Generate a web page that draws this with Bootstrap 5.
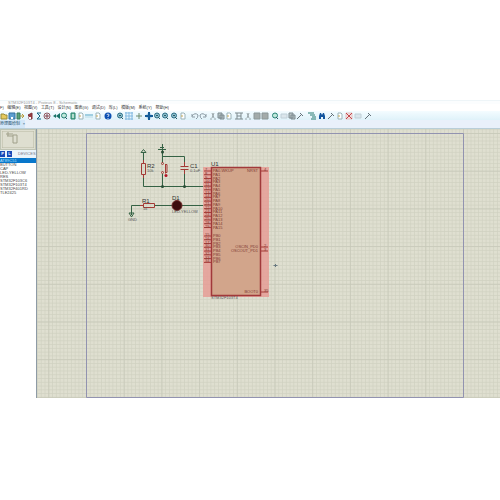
<!DOCTYPE html>
<html lang="zh-CN">
<head>
<meta charset="utf-8">
<meta name="viewport" content="width=device-width, initial-scale=1">
<title>Schematic Capture</title>
<link href="https://cdn.jsdelivr.net/npm/bootstrap@5.3.0/dist/css/bootstrap.min.css" rel="stylesheet">
<style>
body{font:4px/7px "Liberation Sans","Noto Sans CJK SC",sans-serif;color:#333;background:#fff;overflow-x:hidden}
button{border:0;background:none;padding:0;font:inherit;color:inherit;line-height:inherit}
.app-window{margin-top:100px}
.title-strip{height:4px;line-height:3px;background:#fbfdfe;border-top:1px solid #eef5f8;padding-left:8px;color:#999;overflow:hidden}
.menu-strip{height:7px;max-width:169px;background:#fff;overflow:hidden;white-space:nowrap}
.menu-strip button{flex:none}
.tool-strip{height:9px;background:linear-gradient(#f4fcff,#dff2fa)}
.tool{flex:none;width:8px;height:9px;display:flex;align-items:center}
.tool svg{width:8px;height:8px;fill:none;stroke:#506c78;stroke-width:1}
.s1{margin-left:1px}.s2{margin-left:2px}.s4{margin-left:4px}
.tab-strip{height:9px;background:#e9f0fa;border-bottom:1px solid #b9ced8}
.doc-tab{height:8px;width:25px;background:#d3e6f8;color:#28536f;white-space:nowrap;line-height:8px}
.side{width:36px;flex:none;background:#fff}
.overview{height:21px;background:#deded0;border:1px solid #bfc4b4;padding:1px}
.overview svg{display:block;width:100%;height:17px}
.picker{height:8px;gap:2px;padding-top:1px;background:#eaf4fb;line-height:6px;color:#778}
.picker button{width:5px;height:6px;line-height:6px;background:#1749b8;color:#fff;font-weight:bold}
.picker span{margin-left:4px}
.parts{line-height:4px}
.parts button{display:block;width:100%;height:4px;text-align:left;white-space:nowrap;font-size:4px;color:#444}
.parts button.chosen{background:#0877cb;color:#b7e0ff;height:5px}
.sheet{height:269px;border-left:1px solid #8e9ba6;background:#dfdfd0}
.sheet svg{display:block;width:100%;height:269px}
.sheet text{font-size:4px;fill:#555}
.sheet .ref{font-size:6px;fill:#333}
.sheet .pin{font-size:4px;fill:#803a32}
.wire{stroke:#356244;fill:none}
.part{stroke:#a43a36;fill:none}
</style>
<script src="https://cdn.jsdelivr.net/npm/bootstrap@5.3.0/dist/js/bootstrap.bundle.min.js"></script>
</head>
<body>
<svg width="0" height="0" class="position-absolute" aria-hidden="true">
<symbol id="open" viewBox="0 0 8 8"><path d="M1 7V2h3l1 1h2v4z" fill="#e5c95d" stroke="#9a8b38"/></symbol>
<symbol id="save" viewBox="0 0 8 8"><path d="M1 1h6v6H1z" fill="#5d9fd0" stroke="#33719f"/><path d="M3 5h2v2H3z" fill="#fff" stroke="none"/></symbol>
<symbol id="import" viewBox="0 0 8 8"><path d="M1 1h3v6H1z" fill="#5aa37c" stroke="#397b5b"/><path d="M4 4h4M6 2l2 2-2 2" stroke="#b69b3a"/></symbol>
<symbol id="home" viewBox="0 0 8 8"><path d="M2 3l4-2v6H3V4z" fill="#9a3e42" stroke="#803238"/><path d="M3 5h2v2H3z" fill="#fff" stroke="none"/></symbol>
<symbol id="sum" viewBox="0 0 8 8"><path d="M6 1H2l3 3-3 3h4" stroke="#166784"/></symbol>
<symbol id="target" viewBox="0 0 8 8"><circle cx="4" cy="4" r="3" stroke="#8f5860"/><path d="M4 2v4M2 4h4" stroke="#86404b"/></symbol>
<symbol id="rewind" viewBox="0 0 8 8"><path d="M4 2L1 4l3 2zM8 1v6L4 4z" fill="#177367" stroke="none"/></symbol>
<symbol id="find" viewBox="0 0 8 8"><circle cx="4" cy="3.500" r="2.500" fill="#bfe8dc" stroke="#258274"/><path d="M5 5l2 2" stroke="#275a65"/></symbol>
<symbol id="lens" viewBox="0 0 8 8"><circle cx="4" cy="3.500" r="2.500" fill="#8fc0cf" stroke="#2b6f86"/><path d="M3 3.500h2M5 5l2 2" stroke="#275a65"/></symbol>
<symbol id="bill" viewBox="0 0 8 8"><path d="M2 1h4v6H2z" fill="#6bbba0" stroke="#27816d"/><path d="M3 3h2M3 5h2" stroke="#fff"/></symbol>
<symbol id="sheet" viewBox="0 0 8 8"><path d="M2 1h3l1 1v5H2z" fill="#fff" stroke="#9bb3b8"/><path d="M2 4h2" stroke="#c2a957"/></symbol>
<symbol id="line" viewBox="0 0 8 8"><path d="M0 3h8" stroke="#57a7c5"/><path d="M0 5h8" stroke="#b7dbe6"/></symbol>
<symbol id="faint" viewBox="0 0 8 8"><path d="M1 2h6v4H1z" fill="#dbe6ec" stroke="#c0d0d8"/></symbol>
<symbol id="help" viewBox="0 0 8 8"><circle cx="4" cy="4" r="3.500" fill="#0b50b2" stroke="none"/><path d="M3 3q0-1 1-1t1 1q0 1-1 1v1M4 6v1" stroke="#fff" stroke-width=".8"/></symbol>
<symbol id="grid" viewBox="0 0 8 8"><path d="M0 1h8M0 4h8M0 7h8M1 0v8M4 0v8M7 0v8" stroke="#83b9e1"/></symbol>
<symbol id="plus" viewBox="0 0 8 8"><path d="M4 1v6M1 4h6" stroke="#6d8c70"/></symbol>
<symbol id="move" viewBox="0 0 8 8"><path d="M4 0l2 2 2 2-2 2-2 2-2-2-2-2 2-2z" fill="#a9cde6" stroke="none"/><path d="M4 0v8M0 4h8" stroke="#155d98" stroke-width="2"/></symbol>
<symbol id="undo" viewBox="0 0 8 8"><path d="M1 2v3h3M1 4q3-4 6-1 0 3-2 4" stroke="#8b9aa3"/></symbol>
<symbol id="redo" viewBox="0 0 8 8"><path d="M7 2v3H4M7 4Q4 0 1 3q0 3 2 4" stroke="#8b9aa3"/></symbol>
<symbol id="cut" viewBox="0 0 8 8"><path d="M3 1l2 5M5 1L3 6M1 7h2M5 7h2" stroke="#9ba7aa"/></symbol>
<symbol id="copy" viewBox="0 0 8 8"><path d="M1 1h4v5H1zM3 3h4v4H3z" fill="#b9c4c6" stroke="#7d8b90"/></symbol>
<symbol id="block" viewBox="0 0 8 8"><path d="M1 1h6v6H1z" fill="#a3abaa" stroke="#8c9899"/></symbol>
<symbol id="beam" viewBox="0 0 8 8"><path d="M0 1h8M0 7h8M2 1v6M6 1v6M2 4h4" stroke="#7c8a8e"/></symbol>
<symbol id="pick" viewBox="0 0 8 8"><path d="M1 7l5-5M4 1l3 3" stroke="#65727a"/></symbol>
<symbol id="tree" viewBox="0 0 8 8"><path d="M0 1h6M2 3h5M4 5h4M3 7h5" stroke="#267b70"/></symbol>
<symbol id="bino" viewBox="0 0 8 8"><path d="M1 7V4l1-3h1l1 2 1-2h1l1 3v3H5V5H3v2z" fill="#13559e" stroke="none"/></symbol>
<symbol id="cross" viewBox="0 0 8 8"><path d="M1 1h6v6H1z" fill="#f3dede" stroke="#e3c4c4"/><path d="M1 1l6 6M7 1L1 7" stroke="#c4474b"/></symbol>
</svg>
<div class="app-window">
<header>
<div class="title-strip">STM32F103T4 - Proteus 8 - Schematic</div>
<nav class="menu-strip d-flex justify-content-between" aria-label="菜单"><button>F)</button><button>编辑(E)</button><button>视图(V)</button><button>工具(T)</button><button>设计(N)</button><button>图表(G)</button><button>调试(D)</button><button>库(L)</button><button>模版(M)</button><button>系统(Y)</button><button>帮助(H)</button></nav>
<div class="tool-strip d-flex" role="toolbar" aria-label="工具栏">
<button class="tool" aria-label="打开"><svg><use href="#open"/></svg></button>
<button class="tool" aria-label="保存"><svg><use href="#save"/></svg></button>
<button class="tool" aria-label="导入"><svg><use href="#import"/></svg></button>
<button class="tool s2" aria-label="主页"><svg><use href="#home"/></svg></button>
<button class="tool s1" aria-label="原理图"><svg><use href="#sum"/></svg></button>
<button class="tool" aria-label="布线"><svg><use href="#target"/></svg></button>
<button class="tool s1" aria-label="三维"><svg><use href="#rewind"/></svg></button>
<button class="tool" aria-label="查看"><svg><use href="#find"/></svg></button>
<button class="tool s1" aria-label="清单"><svg><use href="#bill"/></svg></button>
<button class="tool" aria-label="文档"><svg><use href="#sheet"/></svg></button>
<button class="tool" aria-label="代码"><svg><use href="#line"/></svg></button>
<button class="tool s1" aria-label="新建"><svg><use href="#sheet"/></svg></button>
<button class="tool s2" aria-label="帮助"><svg><use href="#help"/></svg></button>
<button class="tool s4" aria-label="刷新"><svg><use href="#lens"/></svg></button>
<button class="tool s1" aria-label="网格"><svg><use href="#grid"/></svg></button>
<button class="tool s2" aria-label="原点"><svg><use href="#plus"/></svg></button>
<button class="tool s2" aria-label="平移"><svg><use href="#move"/></svg></button>
<button class="tool" aria-label="放大"><svg><use href="#lens"/></svg></button>
<button class="tool" aria-label="缩小"><svg><use href="#lens"/></svg></button>
<button class="tool s1" aria-label="全部"><svg><use href="#lens"/></svg></button>
<button class="tool s1" aria-label="区域"><svg><use href="#sheet"/></svg></button>
<button class="tool s4" aria-label="撤销"><svg><use href="#undo"/></svg></button>
<button class="tool" aria-label="重做"><svg><use href="#redo"/></svg></button>
<button class="tool s2" aria-label="剪切"><svg><use href="#cut"/></svg></button>
<button class="tool" aria-label="复制"><svg><use href="#copy"/></svg></button>
<button class="tool" aria-label="粘贴"><svg><use href="#sheet"/></svg></button>
<button class="tool s2" aria-label="块复制"><svg><use href="#beam"/></svg></button>
<button class="tool s1" aria-label="块移动"><svg><use href="#cut"/></svg></button>
<button class="tool s1" aria-label="块旋转"><svg><use href="#block"/></svg></button>
<button class="tool" aria-label="块删除"><svg><use href="#block"/></svg></button>
<button class="tool s2" aria-label="选取"><svg><use href="#find"/></svg></button>
<button class="tool s1" aria-label="制作"><svg><use href="#faint"/></svg></button>
<button class="tool" aria-label="封装"><svg><use href="#copy"/></svg></button>
<button class="tool" aria-label="分解"><svg><use href="#pick"/></svg></button>
<button class="tool s4" aria-label="自动连线"><svg><use href="#tree"/></svg></button>
<button class="tool s2" aria-label="搜索"><svg><use href="#bino"/></svg></button>
<button class="tool s1" aria-label="属性"><svg><use href="#pick"/></svg></button>
<button class="tool s1" aria-label="新图纸"><svg><use href="#sheet"/></svg></button>
<button class="tool s1" aria-label="删除图纸"><svg><use href="#cross"/></svg></button>
<button class="tool s1" aria-label="退出图纸"><svg><use href="#faint"/></svg></button>
<button class="tool s2" aria-label="电气检查"><svg><use href="#pick"/></svg></button>
</div>
<div class="tab-strip"><button class="doc-tab d-flex justify-content-between"><span>原理图绘制</span><span>×</span></button></div>
</header>
<main class="d-flex">
<aside class="side">
<div class="overview"><svg viewBox="0 0 32 17"><path d="M0 0h32v17H0z" fill="none" stroke="#b8b8a2"/><path d="M11 4h4v8h-4zM4 3h7M6 1v4M5 5h6" fill="none" stroke="#a0a08a"/></svg></div>
<div class="picker d-flex"><button>P</button><button>L</button><span>DEVICES</span></div>
<div class="parts"><button class="chosen">AT89C51</button><button>BUTTON</button><button>CAP</button><button>LED-YELLOW</button><button>RES</button><button>STM32F103C6</button><button>STM32F103T4</button><button>STM32F401RD</button><button>TLE2425</button></div>
</aside>
<section class="sheet flex-grow-1" aria-label="原理图">
<svg>
<defs>
<pattern id="minor" x="86" y="133" width="3.77" height="3.77" patternUnits="userSpaceOnUse"><path d="M0 .5h4M.5 0v4" stroke="#d0d1c0" stroke-width=".7"/></pattern>
<pattern id="major" x="86" y="133" width="37.7" height="37.7" patternUnits="userSpaceOnUse"><path d="M0 .5h38M.5 0v38" stroke="#c6c8b8" stroke-width=".7"/></pattern>
</defs>
<g transform="translate(-37 -129)">
<rect x="37" y="129" width="3000" height="269" fill="url(#minor)"/><rect x="37" y="129" width="3000" height="269" fill="url(#major)"/>
<path d="M86.500 133.500h377v264h-377z" fill="none" stroke="#9293b0"/>
<path class="wire" d="M143.500 152v11M143.500 175v11.500H211M162.500 150v13M162.500 174v12M162.500 156.500h22v9M184.500 169v17M131.500 215v-9.500h12M155 205.500h17M182 205.500h29M158 149.500h8M160 147.500h4M162.500 144v6M141 152.500l2.500-3 2.500 3zM129 213l2.500 4 2.500-4z"/>
<g fill="#284c34"><circle cx="162.500" cy="152" r="1.500"/><circle cx="162.500" cy="186.500" r="1.500"/><circle cx="184.500" cy="186.500" r="1.500"/></g>
<path class="part" d="M141.500 163.500h4v11h-4zM143.500 160v3M143.500 175v3M143.500 203.500h11v4h-11zM140 205.500h3M180.500 166.500h8M180.500 169.500h8M184.500 162v4M184.500 170v4M165.500 164.500v9M165 164.500h2v8h-2"/>
<g class="part"><circle cx="162.500" cy="163.500" r="1"/><circle cx="162.500" cy="172.500" r="1"/></g>
<circle cx="166" cy="175.500" r="1.500" fill="#b31425"/>
<circle cx="177" cy="205.500" r="5" fill="#3d0d0e" stroke="#702a29"/>
<text class="ref" x="147" y="168">R2</text><text x="147" y="172">10k</text>
<text class="ref" x="190" y="168">C1</text><text x="190" y="172">0.1uF</text>
<text class="ref" x="142" y="203">R1</text><text x="143" y="210">1k</text>
<text class="ref" x="172" y="200">D1</text><text x="172" y="213">LED-YELLOW</text>
<text x="128" y="221">GND</text>
<path d="M203 167h66v130h-66z" fill="#e79b94" fill-opacity=".82"/>
<path d="M211.500 167.500h49v128h-49z" fill="#d2a58b" stroke="#a1393a" stroke-width="1.500"/>
<text class="ref" x="211" y="166">U1</text><text x="211" y="299">STM32F103T4</text>
<g id="pins"></g>
<path d="M275.500 264v3M273.500 265.500h4" stroke="#687980"/>
</g>
</svg>
</section>
</main>
</div>
<script>
const pins = document.getElementById('pins');
const pin = (y, name, number, right) => {
  const x = right ? 258 : 213;
  pins.insertAdjacentHTML('beforeend',
    `<path class="part" d="M${right ? 261 : 204} ${y}h7"/>` +
    `<text class="pin" x="${x}" y="${y + 1}" text-anchor="${right ? 'end' : 'start'}">${name}</text>` +
    `<text class="pin" x="${right ? 264 : 205}" y="${y}">${number}</text>`);
};
const portA = [7, 8, 9, 10, 11, 12, 13, 14, 20, 21, 22, 23, 24, 25, 28, 29];
const portB = [15, 16, 17, 30, 31, 32, 33, 34];
portA.forEach((n, i) => pin(171 + i * 3.77, i ? 'PA' + i : 'PA0-WKUP', n));
portB.forEach((n, i) => pin(236 + i * 3.77, 'PB' + i, n));
pin(171, 'NRST', 4, true);
pin(247, 'OSCIN_PD0', 2, true);
pin(251, 'OSCOUT_PD1', 3, true);
pin(292, 'BOOT0', 35, true);
</script>
</body>
</html>
